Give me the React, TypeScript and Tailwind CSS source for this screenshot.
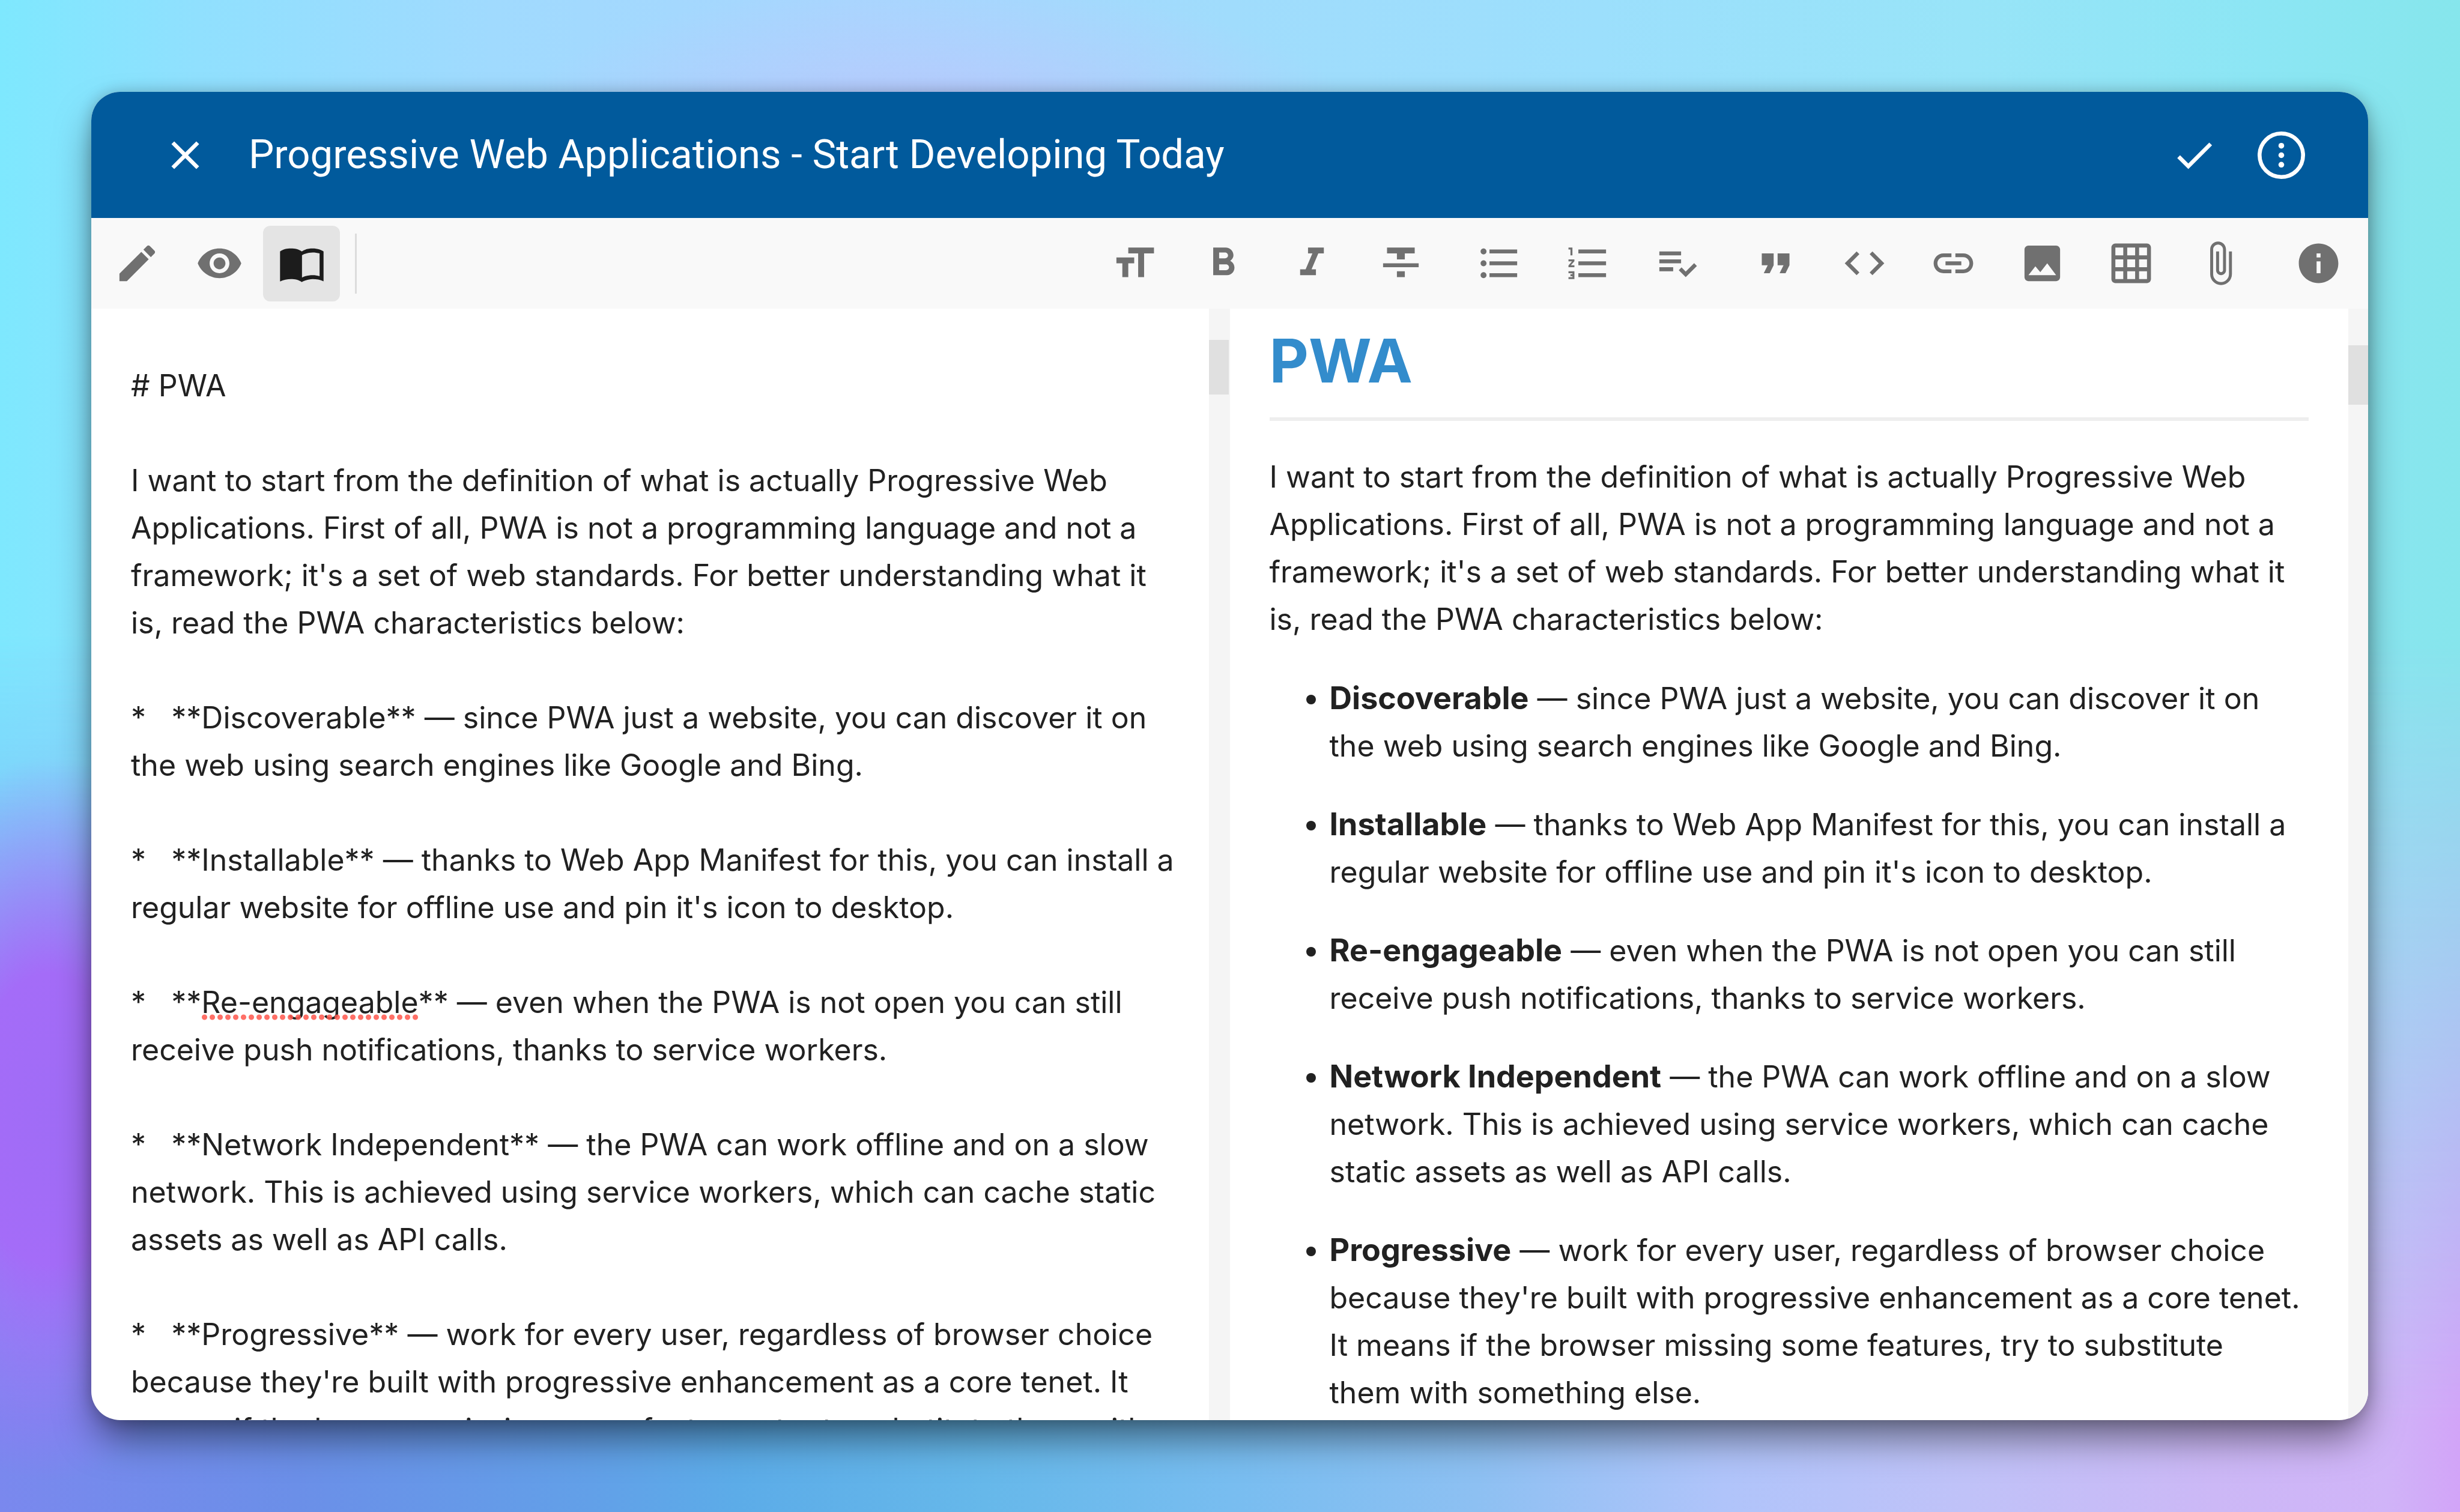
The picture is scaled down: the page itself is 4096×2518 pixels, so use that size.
import React from "react";

const ICONS = {
  pencil:
    "M3 17.25V21h3.75L17.81 9.94l-3.75-3.75L3 17.25zM20.71 7.04c.39-.39.39-1.02 0-1.41l-2.34-2.34c-.39-.39-1.02-.39-1.41 0l-1.83 1.83 3.75 3.75 1.83-1.83z",
  eye: "M12 4.5C7 4.5 2.73 7.61 1 12c1.73 4.39 6 7.5 11 7.5s9.27-3.11 11-7.5c-1.73-4.39-6-7.5-11-7.5zM12 17c-2.76 0-5-2.24-5-5s2.24-5 5-5 5 2.24 5 5-2.24 5-5 5zm0-8c-1.66 0-3 1.34-3 3s1.34 3 3 3 3-1.34 3-3-1.34-3-3-3z",
  book: "M21 5c-1.11-.35-2.33-.5-3.5-.5-1.95 0-4.05.4-5.5 1.5-1.45-1.1-3.55-1.5-5.5-1.5S2.45 4.9 1 6v15.2c1.6-.8 3.8-1.2 5.5-1.2 1.95 0 4.05.4 5.5 1.5 1.35-.85 3.8-1.5 5.5-1.5 1.8 0 3.9.3 5.5 1.1V6c-.6-.45-1.25-.75-2-1zm0 13.5c-1.1-.35-2.3-.5-3.5-.5-1.7 0-4.15.4-5.4 1.2V7.9c1.25-.8 3.7-1.4 5.4-1.4 1.2 0 2.4.15 3.5.5v11.5z",
  size: "M9 4v3h5v12h3V7h5V4H9zm-6 8h3v7h3v-7h3V9H3v3z",
  bold: "M15.6 10.79c.97-.67 1.65-1.77 1.65-2.79 0-2.26-1.75-4-4-4H7v14h7.04c2.09 0 3.71-1.7 3.71-3.79 0-1.52-.86-2.82-2.15-3.42zM10 6.5h3c.83 0 1.5.67 1.5 1.5s-.67 1.5-1.5 1.5h-3v-3zm3.5 9H10v-3h3.5c.83 0 1.5.67 1.5 1.5s-.67 1.5-1.5 1.5z",
  italic: "M10 4v3h2.21l-3.42 8H6v3h8v-3h-2.21l3.42-8H18V4z",
  strike: "M10 19h4v-3h-4v3zM5 4v3h5v3h4V7h5V4H5zM3 14h18v-2H3v2z",
  bullets:
    "M4 10.5c-.83 0-1.5.67-1.5 1.5s.67 1.5 1.5 1.5 1.5-.67 1.5-1.5-.67-1.5-1.5-1.5zm0-6c-.83 0-1.5.67-1.5 1.5S3.17 7.5 4 7.5 5.5 6.83 5.5 6 4.83 4.5 4 4.5zm0 12c-.83 0-1.5.68-1.5 1.5s.68 1.5 1.5 1.5 1.5-.68 1.5-1.5-.67-1.5-1.5-1.5zM7 19h14v-2H7v2zm0-6h14v-2H7v2zm0-8v2h14V5H7z",
  numbers:
    "M2 17h2v.5H3v1h1v.5H2v1h3v-4H2v1zm1-9h1V4H2v1h1v3zm-1 3h1.8L2 13.1v.9h3v-1H3.2L5 10.9V10H2v1zm5-6v2h14V5H7zm0 14h14v-2H7v2zm0-6h14v-2H7v2z",
  tasks:
    "M3 10h11v2H3zM3 6h11v2H3zM3 14h7v2H3zM20.59 11.93l-4.25 4.24-2.12-2.12-1.41 1.41L16.34 19 22 13.34z",
  quote: "M6 17h3l2-4V7H5v6h3zm8 0h3l2-4V7h-6v6h3z",
  code: "M9.4 16.6L4.8 12l4.6-4.6L8 6l-6 6 6 6 1.4-1.4zm5.2 0l4.6-4.6-4.6-4.6L16 6l6 6-6 6-1.4-1.4z",
  link: "M3.9 12c0-1.71 1.39-3.1 3.1-3.1h4V7H7c-2.76 0-5 2.24-5 5s2.24 5 5 5h4v-1.9H7c-1.71 0-3.1-1.39-3.1-3.1zM8 13h8v-2H8v2zm9-6h-4v1.9h4c1.71 0 3.1 1.39 3.1 3.1s-1.39 3.1-3.1 3.1h-4V17h4c2.76 0 5-2.24 5-5s-2.24-5-5-5z",
  image:
    "M21 19V5c0-1.1-.9-2-2-2H5c-1.1 0-2 .9-2 2v14c0 1.1.9 2 2 2h14c1.1 0 2-.9 2-2zM8.5 13.5l2.5 3.01L14.5 12l4.5 6H5l3.5-4.5z",
  table:
    "M20 2H4c-1.1 0-2 .9-2 2v16c0 1.1.9 2 2 2h16c1.1 0 2-.9 2-2V4c0-1.1-.9-2-2-2zM8 20H4v-4h4v4zm0-6H4v-4h4v4zm0-6H4V4h4v4zm6 12h-4v-4h4v4zm0-6h-4v-4h4v4zm0-6h-4V4h4v4zm6 12h-4v-4h4v4zm0-6h-4v-4h4v4zm0-6h-4V4h4v4z",
  attach:
    "M16.5 6v11.5c0 2.21-1.79 4-4 4s-4-1.79-4-4V5c0-1.38 1.12-2.5 2.5-2.5s2.5 1.12 2.5 2.5v10.5c0 .55-.45 1-1 1s-1-.45-1-1V6H10v9.5c0 1.38 1.12 2.5 2.5 2.5s2.5-1.12 2.5-2.5V5c0-2.21-1.79-4-4-4S7 2.79 7 5v12.5c0 3.04 2.46 5.5 5.5 5.5s5.5-2.46 5.5-5.5V6h-1.5z",
  info: "M12 2C6.48 2 2 6.48 2 12s4.48 10 10 10 10-4.48 10-10S17.52 2 12 2zm1 15h-2v-6h2v6zm0-8h-2V7h2v2z",
  close:
    "M19 6.41L17.59 5 12 10.59 6.41 5 5 6.41 10.59 12 5 17.59 6.41 19 12 13.41 17.59 19 19 17.59 13.41 12z",
  check: "M9 16.17L4.83 12l-1.42 1.41L9 19 21 7l-1.41-1.41z",
};

type IconName = keyof typeof ICONS;

function Icon({ name }: { name: IconName }) {
  return (
    <svg viewBox="0 0 24 24" className="size-[79px]" fill="currentColor" aria-hidden="true">
      <path d={ICONS[name]} />
    </svg>
  );
}

function ToolButton({ name, label, active = false }: { name: IconName; label: string; active?: boolean }) {
  return (
    <button
      type="button"
      aria-label={label}
      aria-pressed={active}
      className={
        active
          ? "flex h-[126px] w-32 items-center justify-center rounded-xl bg-[#e4e4e4] text-[#1c1c1c]"
          : "flex h-[126px] w-32 items-center justify-center rounded-xl text-[#707070]"
      }
    >
      <Icon name={name} />
    </button>
  );
}

const TOOL_GROUPS: { name: IconName; label: string }[][] = [
  [
    { name: "size", label: "Heading" },
    { name: "bold", label: "Bold" },
    { name: "italic", label: "Italic" },
    { name: "strike", label: "Strikethrough" },
  ],
  [
    { name: "bullets", label: "Bulleted list" },
    { name: "numbers", label: "Numbered list" },
    { name: "tasks", label: "Task list" },
  ],
  [
    { name: "quote", label: "Quote" },
    { name: "code", label: "Code" },
    { name: "link", label: "Link" },
    { name: "image", label: "Image" },
    { name: "table", label: "Table" },
    { name: "attach", label: "Attachment" },
  ],
  [{ name: "info", label: "Help" }],
];

const INTRO =
  "I want to start from the definition of what is actually Progressive Web Applications. First of all, PWA is not a programming language and not a framework; it's a set of web standards. For better understanding what it is, read the PWA characteristics below:";

const FEATURES = [
  {
    term: "Discoverable",
    text: "since PWA just a website, you can discover it on the web using search engines like Google and Bing.",
  },
  {
    term: "Installable",
    text: "thanks to Web App Manifest for this, you can install a regular website for offline use and pin it's icon to desktop.",
  },
  {
    term: "Re-engageable",
    text: "even when the PWA is not open you can still receive push notifications, thanks to service workers.",
  },
  {
    term: "Network Independent",
    text: "the PWA can work offline and on a slow network. This is achieved using service workers, which can cache static assets as well as API calls.",
  },
  {
    term: "Progressive",
    text: "work for every user, regardless of browser choice because they're built with progressive enhancement as a core tenet. It means if the browser missing some features, try to substitute them with something else.",
  },
];

const SOURCE = ["# PWA", INTRO, ...FEATURES.map((f) => `*   **${f.term}** — ${f.text}`)].join("\n\n");

function Wallpaper() {
  return (
    <div className="absolute inset-0 overflow-hidden bg-[radial-gradient(ellipse_17%_9%_at_38%_8%,#b9c9fd_0%,transparent_100%),linear-gradient(90deg,#7ee8fe_0%,#90e0fe_8%,#a0dafe_20%,#a8d6fe_35%,#a0dcfc_50%,#9cdffc_65%,#98e4f8_80%,#8ce6f4_92%,#86e6ec_100%)]">
      <div className="absolute inset-0 bg-[linear-gradient(90deg,#7a88ee_0%,#6b8fe8_12%,#62a0e8_24%,#5cace8_30%,#66b8ea_40%,#78bdf0_50%,#8dc0f2_60%,#b0c4fa_70%,#c0c2f8_80%,#ccb8f6_90%,#d0b4f8_97%,#d2a4f8_100%)] [mask-image:linear-gradient(to_bottom,transparent_42%,black_94%)]" />
      <div className="absolute inset-0 bg-[radial-gradient(ellipse_8%_24%_at_2%_74%,#a06cf6_0%,#a46cf8_40%,#9578f200_100%)]" />
    </div>
  );
}

export default function App() {
  return (
    <div className="relative flex h-screen py-[153px] pr-[153px] pl-[152px]">
      <Wallpaper />
      <main className="relative flex min-w-0 flex-1 flex-col overflow-hidden rounded-[48px] bg-white font-[Inter,sans-serif] text-[#212121] shadow-[0_36px_64px_-8px_rgba(0,0,0,0.5),0_0_24px_rgba(0,0,0,0.2)]">
        <header className="flex h-[210px] shrink-0 items-center bg-[#015a9c] pr-[105px] pl-[117px] text-white">
          <button type="button" aria-label="Close">
            <Icon name="close" />
          </button>
          <h1 className="ml-[66px] flex-1 pb-0.5 font-[Roboto,sans-serif] text-[67px]">
            Progressive Web Applications - Start Developing Today
          </h1>
          <button type="button" aria-label="Save" className="mr-[66px]">
            <Icon name="check" />
          </button>
          <button type="button" aria-label="More options">
            <svg viewBox="0 0 24 24" className="size-[79px]" aria-hidden="true">
              <circle cx="12" cy="12" r="11" fill="none" stroke="currentColor" strokeWidth="2" />
              <circle cx="12" cy="7.2" r="1.45" fill="currentColor" />
              <circle cx="12" cy="12" r="1.45" fill="currentColor" />
              <circle cx="12" cy="16.8" r="1.45" fill="currentColor" />
            </svg>
          </button>
        </header>

        <div role="toolbar" aria-label="Editor" className="flex h-[151px] shrink-0 items-center justify-between bg-[#f9f9f9] pr-[19px] pl-3">
          <div className="flex items-center gap-[9px]">
            <ToolButton name="pencil" label="Edit" />
            <ToolButton name="eye" label="Preview" />
            <ToolButton name="book" label="Split view" active />
            <div className="ml-4 h-25 w-[3px] bg-[#dcdcdc]" />
          </div>
          <div className="flex items-center gap-9">
            {TOOL_GROUPS.map((group, i) => (
              <div key={i} className="flex items-center gap-5">
                {group.map((t) => (
                  <ToolButton key={t.name} name={t.name} label={t.label} />
                ))}
              </div>
            ))}
          </div>
        </div>

        <div className="flex min-h-0 flex-1 text-[50px] leading-[79px]">
          <section className="flex min-w-0 flex-1">
            <div className="relative flex min-w-0 flex-1">
              <textarea
                aria-label="Markdown source"
                spellCheck={false}
                defaultValue={SOURCE}
                className="min-w-0 flex-1 resize-none overflow-hidden pt-[89px] pr-10 pl-[66px]"
              />
              <div className="absolute top-[1175px] left-[182px] h-2.5 w-[364px] bg-[radial-gradient(circle,#ff5a50dd_4px,transparent_5px)] bg-[length:13px_10px]" />
            </div>
            <div className="w-[35px] bg-[#f5f5f5] pt-[52px]">
              <div className="h-[91px] w-[33px] bg-[#e0e0e0]" />
            </div>
          </section>

          <section className="flex min-w-0 flex-1">
            <article className="min-w-0 flex-1 overflow-hidden px-[66px]">
              <h2 className="border-b-[6px] border-[#eeeeee] pt-7 pb-9 text-[101px] leading-[117px] font-bold text-[#338ccc]">
                PWA
              </h2>
              <p className="mt-[54px]">{INTRO}</p>
              <ul className="mt-[53px] flex list-disc flex-col gap-[52px] pr-3 pl-25">
                {FEATURES.map((f) => (
                  <li key={f.term}>
                    <strong className="text-[52px] leading-none font-bold">{f.term}</strong> — {f.text}
                  </li>
                ))}
              </ul>
            </article>
            <div className="w-[33px] bg-[#f5f5f5] pt-[61px]">
              <div className="h-[99px] bg-[#e0e0e0]" />
            </div>
          </section>
        </div>
      </main>
    </div>
  );
}
